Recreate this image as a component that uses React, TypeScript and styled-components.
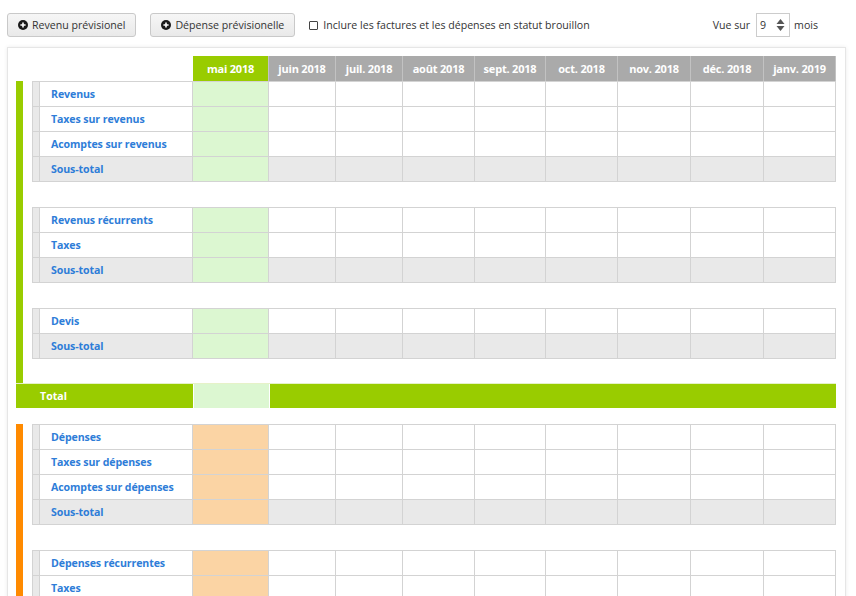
import React from "react";
import styled, { createGlobalStyle } from "styled-components";

const GlobalStyle = createGlobalStyle`
  html, body {
    margin: 0;
    padding: 0;
    background: #ffffff;
    font-family: "Open Sans", "Liberation Sans", sans-serif;
    color: #333333;
    overflow: hidden;
  }
  * { box-sizing: border-box; }
`;

const months = [
  "mai 2018",
  "juin 2018",
  "juil. 2018",
  "août 2018",
  "sept. 2018",
  "oct. 2018",
  "nov. 2018",
  "déc. 2018",
  "janv. 2019",
];
const monthWidths = [76, 67, 67, 72, 71, 72, 73, 73, 72];
const gridCols = `8px 153px ${monthWidths.map((w) => w + "px").join(" ")}`;

type Tone = "green" | "orange";

const tones = {
  green: { bar: "#99cc00", light: "#dcf7d1" },
  orange: { bar: "#ff8a00", light: "#fbd4a4" },
};

interface IGroup {
  rows: string[];
}

const revenueGroups: IGroup[] = [
  { rows: ["Revenus", "Taxes sur revenus", "Acomptes sur revenus"] },
  { rows: ["Revenus récurrents", "Taxes"] },
  { rows: ["Devis"] },
];

const expenseGroups: IGroup[] = [
  { rows: ["Dépenses", "Taxes sur dépenses", "Acomptes sur dépenses"] },
  { rows: ["Dépenses récurrentes", "Taxes", "Acomptes"] },
];

const Toolbar = styled.div`
  display: flex;
  align-items: center;
  height: 24px;
  margin: 13px 0 0 0;
  padding: 0 38px 0 7px;
`;

const Button = styled.button`
  display: flex;
  align-items: center;
  gap: 4px;
  height: 24px;
  padding: 0 10px 0 10px;
  margin-right: 14px;
  border: 1px solid #c9c9c9;
  border-radius: 3px;
  background: linear-gradient(#f6f6f6, #e9e9e9);
  font-family: "Open Sans", "Liberation Sans", sans-serif;
  font-size: 10.6px;
  color: #333333;
`;

const CheckLabel = styled.label`
  display: flex;
  align-items: center;
  gap: 5px;
  font-size: 10.6px;
  color: #333333;
`;

const CheckBox = styled.span`
  width: 9px;
  height: 9px;
  border: 1px solid #444444;
  border-radius: 1px;
  background: #ffffff;
`;

const ViewOn = styled.div`
  display: flex;
  align-items: center;
  margin-left: auto;
  font-size: 10.6px;
  color: #333333;
`;

const NumberBox = styled.div`
  display: flex;
  align-items: center;
  justify-content: space-between;
  width: 34px;
  height: 24px;
  margin: 0 4px 0 6px;
  padding: 0 4px 0 3px;
  border: 1px solid #cccccc;
  background: #ffffff;
  font-size: 10.6px;
`;

const Panel = styled.div`
  margin: 10px 10px 0 7px;
  padding: 8px 9px 0 8px;
  border: 1px solid #e6e6e6;
  border-bottom: none;
  box-shadow: 0 0 4px rgba(0, 0, 0, 0.08);
  height: 560px;
`;

const HeaderRow = styled.div`
  display: grid;
  grid-template-columns: ${gridCols};
  margin-left: 16px;
  height: 25px;
`;

const HeadCell = styled.div<{ $active?: boolean; $blank?: boolean }>`
  display: flex;
  align-items: center;
  justify-content: center;
  background: ${(p) => (p.$blank ? "transparent" : p.$active ? "#99cc00" : "#aaaaaa")};
  border-right: ${(p) => (p.$blank ? "none" : "1px solid #c2c2c2")};
  color: #ffffff;
  font-weight: 700;
  font-size: 11px;
  letter-spacing: -0.2px;
`;

const Section = styled.div<{ $tone: Tone }>`
  display: flex;
  flex-direction: column;
  gap: 25px;
  border-left: 7px solid ${(p) => tones[p.$tone].bar};
  padding: 0 0 24px 9px;
`;

const Group = styled.div`
  border-top: 1px solid #d3d3d3;
`;

const Row = styled.div`
  display: grid;
  grid-template-columns: ${gridCols};
  height: 25px;
`;

const Cell = styled.div<{ $bg: string }>`
  background: ${(p) => p.$bg};
  border-right: 1px solid #d3d3d3;
  border-bottom: 1px solid #d3d3d3;
`;

const Handle = styled(Cell)`
  border-left: 1px solid #d3d3d3;
`;

const Label = styled(Cell)`
  display: flex;
  align-items: center;
  padding-left: 11px;
  color: #2e7dd8;
  font-weight: 700;
  font-size: 10.6px;
  letter-spacing: -0.1px;
`;

const TotalRow = styled.div`
  display: grid;
  grid-template-columns: 177px 77px 1fr;
  height: 25px;
  background: #99cc00;
  border-top: 1px solid #e6f2c8;
`;

const TotalLabel = styled.div`
  display: flex;
  align-items: center;
  padding-left: 24px;
  color: #ffffff;
  font-weight: 700;
  font-size: 10.6px;
`;

const TotalMonth = styled.div`
  background: #dcf7d1;
  border-left: 1px solid #ffffff;
  border-right: 1px solid #ffffff;
`;

const Spacer = styled.div<{ $h: number }>`
  height: ${(p) => p.$h}px;
`;

function PlusCircle() {
  return (
    <svg width="10" height="10" viewBox="0 0 10 10">
      <circle cx="5" cy="5" r="5" fill="#1a1a1a" />
      <path d="M5 2.4v5.2M2.4 5h5.2" stroke="#ffffff" strokeWidth="1.6" />
    </svg>
  );
}

function Spinner() {
  return (
    <svg width="9" height="14" viewBox="0 0 9 14">
      <path d="M4.5 1L8.5 6H0.5Z" fill="#555555" />
      <path d="M4.5 13L8.5 8H0.5Z" fill="#555555" />
    </svg>
  );
}

function genGroup(group: IGroup, tone: Tone) {
  const all = [...group.rows, "Sous-total"];
  return (
    <Group key={group.rows[0]}>
      {all.map((name) => {
        const grey = name === "Sous-total";
        const bg = grey ? "#e9e9e9" : "#ffffff";
        return (
          <Row key={name}>
            <Handle $bg="#e9e9e9" />
            <Label $bg={bg}>{name}</Label>
            {months.map((m, i) => (
              <Cell key={m} $bg={i === 0 ? tones[tone].light : bg} />
            ))}
          </Row>
        );
      })}
    </Group>
  );
}

export default function App() {
  return (
    <>
      <GlobalStyle />
      <Toolbar>
        <Button>
          <PlusCircle />
          Revenu prévisionel
        </Button>
        <Button>
          <PlusCircle />
          Dépense prévisionelle
        </Button>
        <CheckLabel>
          <CheckBox />
          Inclure les factures et les dépenses en statut brouillon
        </CheckLabel>
        <ViewOn>
          Vue sur
          <NumberBox>
            <span>9</span>
            <Spinner />
          </NumberBox>
          mois
        </ViewOn>
      </Toolbar>
      <Panel>
        <HeaderRow>
          <HeadCell $blank />
          <HeadCell $blank />
          {months.map((m, i) => (
            <HeadCell key={m} $active={i === 0}>
              {m}
            </HeadCell>
          ))}
        </HeaderRow>
        <Section $tone="green">
          {revenueGroups.map((g) => genGroup(g, "green"))}
        </Section>
        <TotalRow>
          <TotalLabel>Total</TotalLabel>
          <TotalMonth />
          <div />
        </TotalRow>
        <Spacer $h={16} />
        <Section $tone="orange">
          {expenseGroups.map((g) => genGroup(g, "orange"))}
        </Section>
      </Panel>
    </>
  );
}
